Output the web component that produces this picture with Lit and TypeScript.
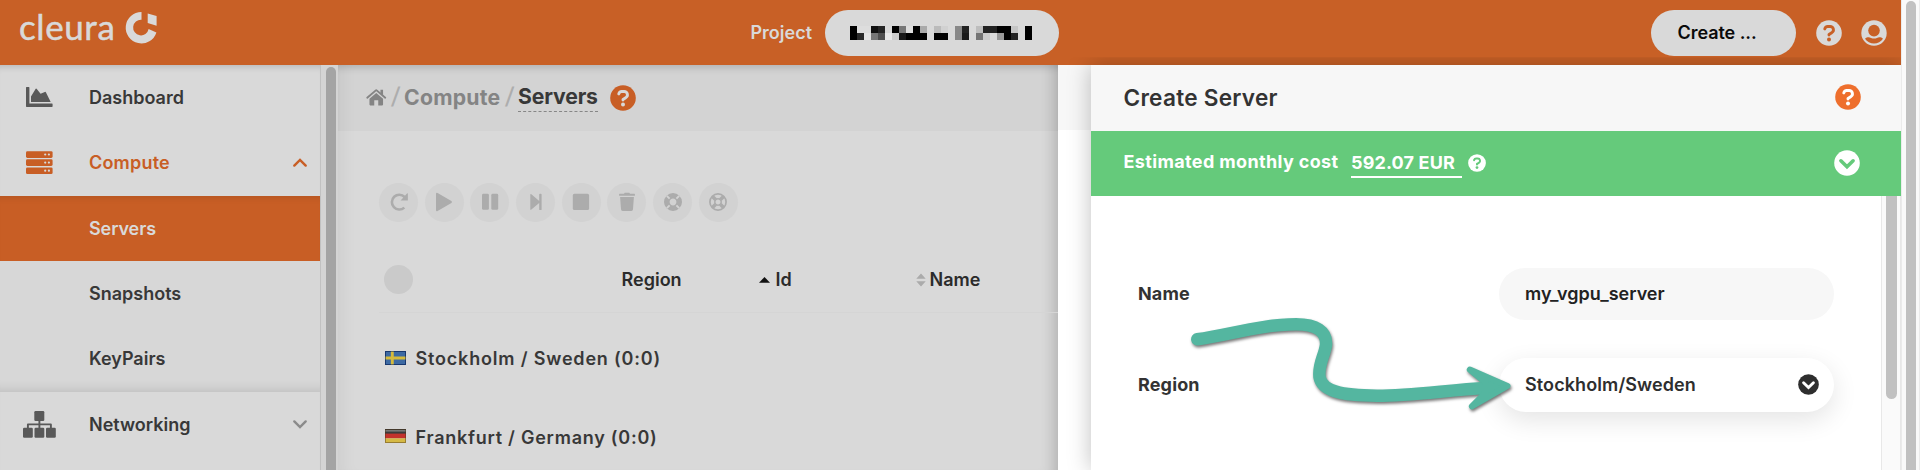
import { LitElement, html, svg, css } from "lit";
import { customElement, property } from "lit/decorators.js";

const glyphs: Record<string, { box: string; art: unknown }> = {
  help: {
    box: "-13 -13 26 26",
    art: svg`<circle r="12.8" fill="currentColor"/><path d="M-4.2 -4.1 L-4.1 -4.5 A3 3 0 0 1 -1.3 -6.5 H1.1 A3.3 3.3 0 0 1 2.7 -0.3 L0 1.4 V2.1" fill="none" stroke="var(--cut)" stroke-width="2.9" stroke-linecap="round" stroke-linejoin="round"/><circle cy="6.6" r="2" fill="var(--cut)"/>`,
  },
  user: {
    box: "-13 -13 26 26",
    art: svg`<circle r="12.7" fill="currentColor"/><circle cy="-2.4" r="5.8" fill="var(--cut)"/><path d="M-9 5.8 C-7 3.9 -4.6 4.1 -3 4.9 Q0 6.1 3 4.9 C4.6 4.1 7 3.9 9 5.8 A11 11 0 0 1 -9 5.8Z" fill="var(--cut)"/>`,
  },
  expand: {
    box: "-13 -13 26 26",
    art: svg`<circle r="12.8" fill="currentColor"/><path d="M-6.1 -2.2 L0 3.7 L6.1 -2.2" fill="none" stroke="var(--cut)" stroke-width="3.6" stroke-linecap="round" stroke-linejoin="miter"/>`,
  },
  chart: {
    box: "0 0 27 20",
    art: svg`<path d="M0 .6 Q0 0 .6 0 H2.8 Q3.4 0 3.4 .6 V16.6 H26 Q26.6 16.6 26.6 17.2 V19.3 Q26.6 19.9 26 19.9 H.6 Q0 19.9 0 19.3Z M5 15 V9.6 L9.7 1.8 Q10.2 1.2 10.8 1.9 L14.6 6.8 L18.8 4.9 Q19.6 4.6 20 5.4 L24.7 15Z" fill="currentColor"/>`,
  },
  server: {
    box: "0 0 27 24",
    art: svg`<g fill="currentColor"><rect y=".2" width="26.6" height="6.7" rx="1.4"/><rect y="8.3" width="26.6" height="6.7" rx="1.4"/><rect y="16.4" width="26.6" height="6.7" rx="1.4"/></g><g fill="var(--cut)"><circle cx="19.2" cy="3.5" r="1.1"/><circle cx="22.9" cy="3.5" r="1.1"/><circle cx="19.2" cy="11.6" r="1.1"/><circle cx="22.9" cy="11.6" r="1.1"/><circle cx="19.2" cy="19.7" r="1.1"/><circle cx="22.9" cy="19.7" r="1.1"/></g>`,
  },
  sitemap: {
    box: "0 0 33 27",
    art: svg`<g fill="currentColor"><rect x="11.3" width="10" height="10" rx="1.2"/><rect y="16.7" width="9.8" height="10" rx="1.2"/><rect x="11.5" y="16.7" width="9.8" height="10" rx="1.2"/><rect x="23" y="16.7" width="9.8" height="10" rx="1.2"/></g><path d="M4.9 17 V13.4 H27.9 V17 M16.4 9 V17" fill="none" stroke="currentColor" stroke-width="1.9" stroke-linejoin="round"/>`,
  },
  up: { box: "0 0 14 9", art: svg`<path d="M1.3 7.6 L7 1.9 L12.7 7.6" fill="none" stroke="currentColor" stroke-width="2.4" stroke-linecap="round"/>` },
  down: { box: "0 0 14 9", art: svg`<path d="M1.3 1.4 L7 7.1 L12.7 1.4" fill="none" stroke="currentColor" stroke-width="2.4" stroke-linecap="round"/>` },
  home: {
    box: "0 0 20 17",
    art: svg`<path d="M1 8.7 L9.3 1.6 Q10 1 10.7 1.6 L19 8.7" fill="none" stroke="currentColor" stroke-width="1.9" stroke-linecap="round"/><path d="M14.2 .8 H16.8 V6.4 L14.2 4.2Z" fill="currentColor"/><path d="M3.2 9.8 L10 4.1 L16.8 9.8 V15.6 Q16.8 16.4 16 16.4 H12 V11.3 H8 V16.4 H4 Q3.2 16.4 3.2 15.6Z" fill="currentColor"/>`,
  },
  redo: {
    box: "-10 -10 20 20",
    art: svg`<path d="M5.6 -5 A7.4 7.4 0 1 0 5.3 5.6" fill="none" stroke="currentColor" stroke-width="2.6"/><path d="M8.9 -8.6 V-2 Q8.9 -1.4 8.3 -1.4 H1.6 L8.2 -8.8Z" fill="currentColor"/>`,
  },
  play: { box: "-10 -10 20 20", art: svg`<path d="M-8 -8 Q-8 -9.8 -6.4 -9 L7.4 -1 Q8.6 0 7.4 1 L-6.4 9 Q-8 9.8 -8 8Z" fill="currentColor"/>` },
  pause: { box: "-10 -10 20 20", art: svg`<g fill="currentColor"><rect x="-8" y="-8.2" width="6.9" height="16" rx="1.4"/><rect x="1.3" y="-8.2" width="6.9" height="16" rx="1.4"/></g>` },
  step: { box: "-10 -10 20 20", art: svg`<path d="M-5.7 -7.2 Q-5.7 -8.6 -4.6 -7.8 L3.2 -1 V-7.6 Q3.2 -8.3 4 -8.3 H4.8 Q5.6 -8.3 5.6 -7.6 V7.4 Q5.6 8.1 4.8 8.1 H4 Q3.2 8.1 3.2 7.4 V1 L-4.6 7.6 Q-5.7 8.4 -5.7 7Z" fill="currentColor"/>` },
  stop: { box: "-10 -10 20 20", art: svg`<rect x="-8.2" y="-8.2" width="16.3" height="16.2" rx="1.6" fill="currentColor"/>` },
  trash: {
    box: "-10 -10 20 20",
    art: svg`<path d="M-7.4 -8.2 H-3 L-2.3 -9.2 H2.3 L3 -8.2 H7.4 Q7.9 -8.2 7.9 -7.7 V-6.3 H-7.9 V-7.7 Q-7.9 -8.2 -7.4 -8.2Z M-6.9 -5.1 H6.9 L6 7.3 Q5.9 8.9 4.3 8.9 H-4.3 Q-5.9 8.9 -6 7.3Z" fill="currentColor"/>`,
  },
  ring: {
    box: "-10 -10 20 20",
    art: svg`<circle r="6.2" fill="none" stroke="currentColor" stroke-width="5.6"/><path d="M-6.2 -6.2 L-3.4 -3.4 M6.2 -6.2 L3.4 -3.4 M-6.2 6.2 L-3.4 3.4 M6.2 6.2 L3.4 3.4" stroke="var(--cut)" stroke-width="1.9"/>`,
  },
  ringOpen: {
    box: "-10 -10 20 20",
    art: svg`<circle r="8.1" fill="none" stroke="currentColor" stroke-width="1.7"/><path d="M-5.8 -5.8 L-2.3 -2.3 M5.8 -5.8 L2.3 -2.3 M-5.8 5.8 L-2.3 2.3 M5.8 5.8 L2.3 2.3" stroke="currentColor" stroke-width="3.6"/><circle r="3.2" fill="var(--cut)" stroke="currentColor" stroke-width="1.5"/>`,
  },
  asc: { box: "0 0 11 6", art: svg`<path d="M0 5.8 L5.5 0 L11 5.8Z" fill="currentColor"/>` },
  sort: { box: "0 0 10 14", art: svg`<path d="M.3 5.7 L5 .4 L9.7 5.7Z M.3 8.2 L5 13.4 L9.7 8.2Z" fill="currentColor"/>` },
  cleura: {
    box: "0 0 31 32",
    art: svg`<path d="M15.5 0 A15.7 15.7 0 1 0 30.4 20.4 L22.6 17 A7.8 7.8 0 1 1 15.5 7.8Z M21.7 1.5 L30.6 4 V13.8 L21.7 11Z" fill="currentColor"/>`,
  },
  se: {
    box: "0 0 21 14",
    art: svg`<rect width="21" height="14" fill="#1f4a86"/><rect x="1" y="1" width="19" height="12" fill="#3d6aa3"/><path d="M0 7 H21 M7.3 0 V14" stroke="#d6bb3c" stroke-width="2.9"/><rect x=".5" y=".5" width="20" height="13" fill="none" stroke="#13295c" stroke-opacity=".55"/>`,
  },
  de: {
    box: "0 0 21 14",
    art: svg`<rect width="21" height="5" fill="#3b3b3b"/><rect y="1" width="21" height="1.6" fill="#777774"/><rect y="4.6" width="21" height="4.8" fill="#c3322c"/><rect y="9.4" width="21" height="4.6" fill="#d5b945"/><rect x=".5" y=".5" width="20" height="13" fill="none" stroke="#4d3518" stroke-opacity=".45"/>`,
  },
};

@customElement("ui-icon")
class UiIcon extends LitElement {
  @property() name = "help";
  static styles = css`
    :host { display: block; flex: none; }
    svg { display: block; width: 100%; height: 100%; overflow: visible; }
  `;
  render() {
    const g = glyphs[this.name];
    return html`<svg viewBox=${g.box}>${g.art}</svg>`;
  }
}

const maskRows = [
  "000 ddd ddd 111 252525 d9d9d9 000 777 dedede 000 aaa d9d9d9 bbb d1d1d1 d9d9d9 888 222 d9d9d9 bdbdbd 222 222 000 000 c5c5c5 d9d9d9 000",
  "000 2a2a2a e4e4e4 777 505050 e9e9e9 cdcdcd 181818 000 000 000 d9d9d9 000 000 d9d9d9 888 1a1a1a d9d9d9 747474 cbcbcb dbdbdb 999 000 222 d9d9d9 000",
].map((r) => r.split(" "));

const actions = ["redo", "play", "pause", "step", "stop", "trash", "ring", "ringOpen"];

@customElement("app-root")
class AppRoot extends LitElement {
  static styles = css`
    :host {
      display: flex; width: 1920px; height: 470px; overflow: hidden; position: relative;
      font-family: Inter, "Open Sans", sans-serif; font-size: 18px; font-weight: 600;
      color: #383838; background: #fff; white-space: nowrap;
    }
    * { box-sizing: border-box; }
    .page { width: 1901px; display: flex; flex-direction: column; flex: none; }
    .bar {
      height: 65.33px; flex: none; background: #c86026; color: #d9d9d9; --cut: #c86026;
      display: flex; align-items: center; padding: 0 14px 0 19px;
    }
    .brand { display: flex; width: 731.5px; align-items: center; gap: 12px; padding-bottom: 10px; }
    .word { font: 400 35px/46px Lato, sans-serif; letter-spacing: 0.6px; width: 95px; margin-top: -3px; -webkit-text-stroke: 0.5px #d9d9d9; }
    .mark { width: 31px; height: 32px; margin-top: 1px; }
    .project { width: 74.5px; }
    .picker { width: 234px; height: 46px; border-radius: 23px; background: #d9d9d9; padding: 16px 25px; }
    .mask { display: grid; grid-template-columns: repeat(26, 7px); grid-auto-rows: 7px; }
    .tools { margin-left: auto; display: flex; align-items: center; }
    .create {
      width: 145px; height: 46px; border-radius: 23px; background: #d9d9d9; color: #0a0a0a;
      padding-left: 27px; line-height: 45px; margin-right: 20px; letter-spacing: -0.05px;
    }
    .i26 { width: 26px; height: 26px; }
    .tools .i26 + .i26 { margin-left: 19.5px; }
    .body { display: flex; flex: 1; min-height: 0; }

    .side { width: 320px; background: #d9d9d9; --cut: #d9d9d9; box-shadow: inset 0 7px 6px -5px #00000026; }
    .item { height: 65.33px; display: flex; align-items: center; padding: 0 13px 1px 0; }
    .pic { width: 89px; padding-left: 26px; }
    .pic.wide { padding-left: 23px; }
    .chart { width: 27px; height: 20px; color: #595959; }
    .server { width: 27px; height: 24px; }
    .sitemap { width: 33px; height: 27px; color: #595959; }
    .chev { width: 14px; height: 9px; margin-left: auto; color: #8b8b8b; }
    .on, .on .chev { color: #c85e25; }
    .t2 { letter-spacing: 0.2px; }
    .t3 { letter-spacing: -0.1px; }
    .current { background: #c85e25; color: #d9d9d9; box-shadow: inset 0 7px 6px -5px #00000018; }
    .sub { background: #d7d7d7; }
    .last { box-shadow: inset 0 -12px 10px -9px #0000001a; }
    .rail { width: 18px; background: #d4d4d4; border-left: 1px solid #c1c1c1; padding: 1.7px 0 0 4.5px; }
    .thumb { display: block; width: 10.5px; border-radius: 6px; background: #a4a4a4; }
    .rail .thumb { height: 480px; }

    .main { width: 720px; background: #d9d9d9; box-shadow: inset -16px 0 14px -12px #00000030, inset 16px 0 18px -14px #00000012; }
    .crumbs {
      height: 65.33px; display: flex; align-items: center; padding-left: 28px;
      font-size: 21.2px; font-weight: 700; color: #848484; --cut: #d9d9d9; background: #00000007;
      box-shadow: inset 0 8px 7px -5px #00000026;
    }
    .home { width: 20.5px; height: 17px; }
    .slash { font-weight: 500; font-size: 23px; color: #adadad; width: 17.5px; text-align: center; transform: skewX(-5deg); margin-top: -3px; }
    .crumb { width: 96.5px; letter-spacing: 0.25px; margin-top: -2px; }
    .here { width: 79.5px; color: #383838; letter-spacing: -0.15px; height: 27px; line-height: 22px; margin-top: 2px; border-bottom: 1.5px dashed #868686; }
    .orange { color: #c85e25; }
    .crumbs .orange { margin-left: 12.5px; }
    .actions { display: flex; gap: 6.7px; padding: 52px 0 0 41px; color: #acacac; --cut: #d3d3d3; }
    .act { width: 39px; height: 39px; border-radius: 50%; background: #d2d2d2; padding: 9.5px; }
    .act ui-icon { width: 20px; height: 20px; }
    .thead { margin: 26px 0 0 41px; height: 65px; border-bottom: 1px solid #d5d5d5; display: grid; grid-template-columns: 5px 237.5px 137px 157px 1fr; align-items: center; color: #2b2b2b; }
    .check { width: 29px; height: 29px; border-radius: 50%; background: #cacaca; }
    .col { display: flex; align-items: center; }
    .asc { width: 11px; height: 6px; color: #111; margin-right: 6px; }
    .sort { width: 10px; height: 14px; color: #ababab; margin-right: 4px; }
    .zones { padding-top: 7px; }
    .zone { height: 78.3px; display: flex; align-items: center; padding-left: 47px; gap: 9.5px; }
    .zone ui-icon { width: 21px; height: 14px; margin-top: -1.5px; }
    .z1 { letter-spacing: 0.82px; }
    .z2 { letter-spacing: 0.75px; }

    .gap { width: 33px; background: linear-gradient(#f7f7f7 65.3px, #fff 65.3px); }
    .panel { width: 810px; background: #fff; box-shadow: 0 0 22px #00000040; display: flex; flex-direction: column; position: relative; color: #333; clip-path: inset(-8px 0 0 -32px); }
    .title { height: 65.33px; flex: none; background: #f7f7f7; display: flex; align-items: center; justify-content: space-between; padding: 0 40px 1px 32.5px; font-size: 22.6px; --cut: #fff; }
    .heading { letter-spacing: 0.25px; }
    .title ui-icon { color: #ee6f2d; }
    .cost { height: 65.33px; flex: none; background: #65ca7b; color: #fff; --cut: #65ca7b; display: flex; align-items: center; padding: 0 41px 0 32.5px; font-weight: 700; }
    .est { width: 227.5px; padding-bottom: 3px; letter-spacing: 0.36px; }
    .sum { width: 111px; height: 28px; line-height: 26px; margin-top: 2px; border-bottom: 2.5px solid #fff; letter-spacing: 0.15px; }
    .cost .tiny { width: 18px; height: 18px; margin-left: 6px; }
    .cost .i26 { margin-left: auto; }
    .form { flex: 1; min-height: 0; display: flex; }
    .fields { width: 790px; padding: 71.5px 47px 0 47px; }
    .field { display: flex; justify-content: space-between; align-items: center; height: 53px; margin-bottom: 38px; }
    .label { font-weight: 700; padding-bottom: 1px; letter-spacing: 0.15px; }
    .control { width: 335px; height: 52.5px; border-radius: 27px; background: #f7f7f7; padding: 0 15px 0 26px; display: flex; align-items: center; justify-content: space-between; color: #222; }
    .v2 { letter-spacing: 0.1px; }
    .select { height: 54px; background: #fff; color: #2e2e2e; box-shadow: 0 8px 26px #0000001c; --cut: #fff; }
    .select ui-icon { width: 21px; height: 21px; }
    .inner { width: 20px; background: #fafafa; border: solid #e8e8e8; border-width: 0 1px; padding-left: 4px; }
    .inner .thumb { height: 203px; border-radius: 0 0 6px 6px; background: #c1c1c1; }
    .outer { flex: 1; background: #fafafa; border: solid #ebebeb; border-width: 0 1px; padding: 1px 0 0 3.5px; }
    .outer .thumb { height: 480px; background: #c1c1c1; }
    .arrow { position: absolute; left: 1180px; top: 300px; width: 350px; height: 130px; filter: drop-shadow(1.5px 2.5px 1.5px #00000088); }
  `;

  private icon(name: string, cls = "") {
    return html`<ui-icon class=${cls} .name=${name}></ui-icon>`;
  }

  render() {
    return html`
      <div class="page">
        <header class="bar">
          <div class="brand"><span class="word">cleura</span>${this.icon("cleura", "mark")}</div>
          <span class="project">Project</span>
          <div class="picker"><div class="mask">
            ${maskRows.flat().map((c) => html`<i style="background:#${c}"></i>`)}
          </div></div>
          <div class="tools"><div class="create">Create ...</div>${this.icon("help", "i26")}${this.icon("user", "i26")}</div>
        </header>
        <div class="body">
          <nav class="side">
            <div class="item"><span class="pic">${this.icon("chart", "chart")}</span><span class="t1">Dashboard</span></div>
            <div class="item on"><span class="pic">${this.icon("server", "server")}</span><span class="t2">Compute</span>${this.icon("up", "chev")}</div>
            <div class="item current"><span class="pic"></span><span class="t3">Servers</span></div>
            <div class="item sub"><span class="pic"></span><span class="t4">Snapshots</span></div>
            <div class="item sub last"><span class="pic"></span><span class="t5">KeyPairs</span></div>
            <div class="item"><span class="pic wide">${this.icon("sitemap", "sitemap")}</span><span class="t6">Networking</span>${this.icon("down", "chev")}</div>
          </nav>
          <div class="rail"><i class="thumb"></i></div>
          <main class="main">
            <div class="crumbs">
              ${this.icon("home", "home")}<span class="slash">/</span><span class="crumb">Compute</span>
              <span class="slash">/</span><span class="here">Servers</span>${this.icon("help", "i26 orange")}
            </div>
            <div class="actions">${actions.map((a) => html`<span class="act">${this.icon(a)}</span>`)}</div>
            <div class="thead">
              <span></span><span class="check"></span><span class="col">Region</span>
              <span class="col">${this.icon("asc", "asc")}Id</span>
              <span class="col">${this.icon("sort", "sort")}Name</span>
            </div>
            <section class="zones">
              <div class="zone">${this.icon("se")}<span class="z1">Stockholm / Sweden (0:0)</span></div>
              <div class="zone">${this.icon("de")}<span class="z2">Frankfurt / Germany (0:0)</span></div>
            </section>
          </main>
          <div class="gap"></div>
          <aside class="panel">
            <div class="title"><span class="heading">Create Server</span>${this.icon("help", "i26")}</div>
            <div class="cost"><span class="est">Estimated monthly cost</span><span class="sum">592.07 EUR</span>${this.icon("help", "tiny")}${this.icon("expand", "i26")}</div>
            <div class="form">
              <div class="fields">
                <div class="field"><span class="label">Name</span><div class="control"><span class="v1">my_vgpu_server</span></div></div>
                <div class="field"><span class="label">Region</span><div class="control select"><span class="v2">Stockholm/Sweden</span>${this.icon("expand")}</div></div>
              </div>
              <div class="inner"><i class="thumb"></i></div>
            </div>
          </aside>
        </div>
      </div>
      <div class="outer"><i class="thumb"></i></div>
      <svg class="arrow" viewBox="1180 300 350 130">
        <path d="M1197.3 339.3 C1232 334 1262 324.5 1296 324.3 C1316 324.3 1327 331 1326 345 C1324.5 356 1318 364 1319.5 377 C1322 391 1341 395.5 1377 395.7 C1412 395.7 1448 390 1486 388" fill="none" stroke="#54b6a0" stroke-width="12.5" stroke-linecap="round"/>
        <path d="M1469.8 369.6 L1507.5 386 L1471.8 406.3 L1486 392 V383Z" fill="#54b6a0" stroke="#54b6a0" stroke-width="6" stroke-linejoin="round"/>
      </svg>`;
  }
}
